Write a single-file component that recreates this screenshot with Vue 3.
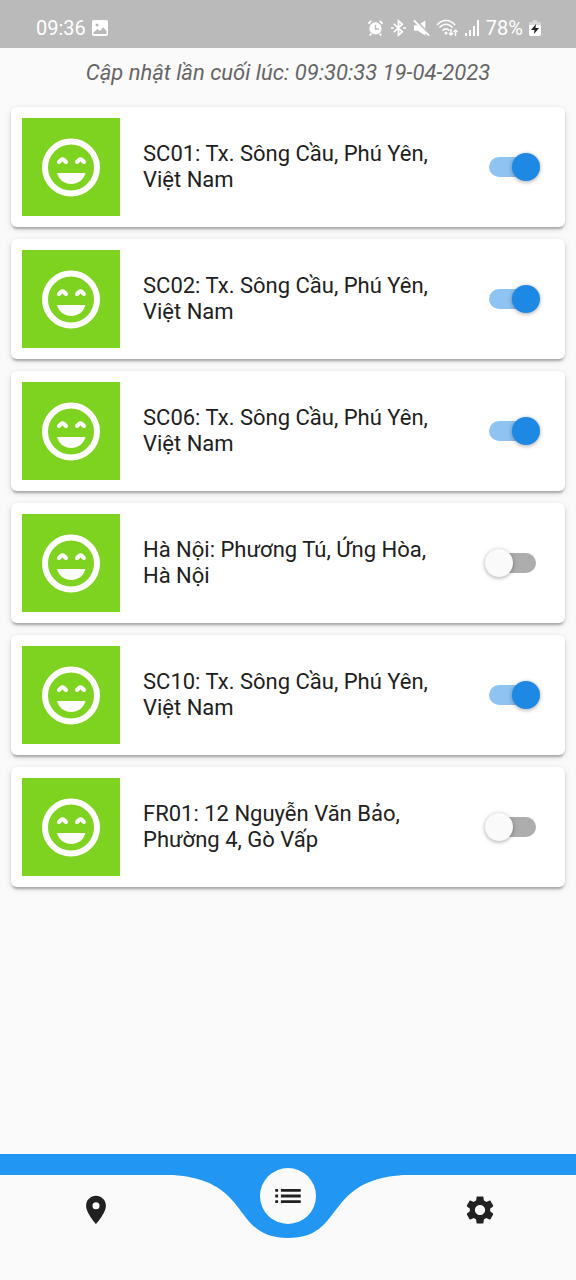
<script setup>
import { ref } from "vue";

const updatedAt = ref("09:30:33 19-04-2023");

const stations = ref([
  { id: "sc01", name: "SC01: Tx. Sông Cầu, Phú Yên, Việt Nam", enabled: true },
  { id: "sc02", name: "SC02: Tx. Sông Cầu, Phú Yên, Việt Nam", enabled: true },
  { id: "sc06", name: "SC06: Tx. Sông Cầu, Phú Yên, Việt Nam", enabled: true },
  { id: "hanoi", name: "Hà Nội: Phương Tú, Ứng Hòa, Hà Nội", enabled: false },
  { id: "sc10", name: "SC10: Tx. Sông Cầu, Phú Yên, Việt Nam", enabled: true },
  { id: "fr01", name: "FR01: 12 Nguyễn Văn Bảo, Phường 4, Gò Vấp", enabled: false },
]);
</script>

<template>
  <div class="screen">
    <header class="status-bar">
      <div class="status-group">
        <span class="clock">09:36</span>
        <svg class="picture" viewBox="0 0 16 16">
          <path
            fill="#fff"
            fill-rule="evenodd"
            d="M2 0h12a2 2 0 0 1 2 2v12a2 2 0 0 1-2 2H2a2 2 0 0 1-2-2V2a2 2 0 0 1 2-2zM1.500 12.500v1.500h13v-3L11 7.200 8 11 5.500 9zM5 3.500a1.500 1.500 0 1 0 0 3 1.500 1.500 0 0 0 0-3z"
          />
        </svg>
      </div>
      <div class="status-group">
        <svg class="glyph" viewBox="0 0 18 18" fill="none" stroke="#fff">
          <circle cx="9" cy="9.500" r="6.500" fill="#fff" stroke="none" />
          <path d="M1.500 4.500l3-3M16.500 4.500l-3-3M4.500 15l-1.500 2M13.500 15l1.500 2" stroke-width="2" />
          <path d="M9 5.500v4.500h3.500" stroke="#bababa" stroke-width="1.500" />
        </svg>
        <svg class="glyph" viewBox="0 0 18 18" fill="none" stroke="#fff" stroke-width="1.800">
          <path d="M4 4.500l9 8.500-4 3.500v-15l4 3.500-9 8.500" />
          <path d="M1 9h3M14 9h3" />
        </svg>
        <svg class="glyph" viewBox="0 0 18 18">
          <path d="M1 6h4l8-5v16l-8-5H1z" fill="#fff" />
          <path d="M2 0l16 16" stroke="#bababa" stroke-width="2" />
          <path d="M1 1l16 16" stroke="#fff" stroke-width="2" />
        </svg>
        <svg class="wifi" viewBox="0 0 22 18" fill="none" stroke="#fff" stroke-width="1.500">
          <path d="M1 6c5-6 13-6 18 0M3.500 8.500c4-4.500 9-4.500 13 0M6.500 11.500c2.500-2.500 4.500-2.500 7 0" />
          <circle cx="10" cy="14" r="1.500" fill="#fff" stroke="none" />
          <path d="M15 10v6M13 14l2 2 2-2M19.500 17v-6M17.500 13l2-2 2 2" />
        </svg>
        <svg class="signal" viewBox="0 0 16 18" stroke="#fff" stroke-width="2">
          <path d="M2 17v-3M6 17v-6M10 17V7M14 17V1" />
        </svg>
        <span class="clock">78%</span>
        <svg class="battery" viewBox="0 0 12 18">
          <path d="M4 1h4v2h2a2 2 0 0 1 2 2v2H0V5a2 2 0 0 1 2-2h2z" fill="#d8d8d8" />
          <path d="M0 6h12v9a2 2 0 0 1-2 2H2a2 2 0 0 1-2-2z" fill="#fff" />
          <path d="M7 5l-5 6h3.500L5 15l5-6H6.500z" fill="#222" />
        </svg>
      </div>
    </header>

    <main class="content">
      <p class="updated">Cập nhật lần cuối lúc: {{ updatedAt }}</p>

      <ul class="stations">
        <li v-for="station in stations" :key="station.id" class="card">
          <svg class="mood" viewBox="0 0 98 98">
            <circle cx="49" cy="49.500" r="26" fill="none" stroke="#fff" stroke-width="6" />
            <path
              d="M37 44l2-2q1.500-1.500 3 0l2 2M55 44l2-2q1.500-1.500 3 0l2 2"
              fill="none"
              stroke="#fff"
              stroke-width="4"
              stroke-linecap="round"
            />
            <path d="M35 55h28.500C61.500 62 56 66 49.250 66S37 62 35 55z" fill="#fff" />
          </svg>
          <label class="name" :for="station.id">{{ station.name }}</label>
          <input
            :id="station.id"
            v-model="station.enabled"
            class="switch"
            type="checkbox"
            role="switch"
          />
        </li>
      </ul>
    </main>

    <nav class="bottom-nav">
      <svg class="wave" viewBox="0 0 576 84" preserveAspectRatio="none">
        <path
          d="M0 0H576V21H403.200C322.600 26.250 345.600 84 288 84S253.400 26.250 172.800 21H0z"
          fill="#2196f3"
        />
      </svg>
      <a class="nav-item" href="#map" aria-label="Bản đồ">
        <svg viewBox="0 0 24 24">
          <path
            d="M12 2C8.130 2 5 5.130 5 9c0 5.250 7 13 7 13s7-7.750 7-13c0-3.870-3.130-7-7-7zm0 9.500a2.500 2.500 0 0 1 0-5 2.500 2.500 0 0 1 0 5z"
          />
        </svg>
      </a>
      <a class="nav-item active" href="#list" aria-label="Danh sách">
        <svg viewBox="0 0 24 24">
          <path
            d="M3 13h2v-2H3v2zm0 4h2v-2H3v2zm0-8h2V7H3v2zm4 4h14v-2H7v2zm0 4h14v-2H7v2zM7 7v2h14V7H7z"
          />
        </svg>
      </a>
      <a class="nav-item" href="#settings" aria-label="Cài đặt">
        <svg viewBox="0 0 24 24">
          <path
            d="M19.140 12.940c.04-.3.06-.61.06-.94 0-.32-.02-.64-.07-.94l2.030-1.580c.18-.14.23-.41.12-.61l-1.920-3.320c-.12-.22-.37-.29-.59-.22l-2.390.96c-.5-.38-1.030-.7-1.620-.94l-.36-2.540c-.04-.24-.24-.41-.48-.41h-3.840c-.24 0-.43.17-.47.41l-.36 2.540c-.59.24-1.130.57-1.620.94l-2.390-.96c-.22-.08-.47 0-.59.22L2.740 8.870c-.12.21-.08.47.12.61l2.030 1.580c-.05.3-.09.63-.09.94s.02.64.07.94l-2.030 1.580c-.18.14-.23.41-.12.61l1.920 3.320c.12.22.37.29.59.22l2.390-.96c.5.38 1.030.7 1.620.94l.36 2.540c.05.24.24.41.48.41h3.840c.24 0 .44-.17.47-.41l.36-2.540c.59-.24 1.130-.56 1.620-.94l2.390.96c.22.08.47 0 .59-.22l1.920-3.320c.12-.22.07-.47-.12-.61l-2.010-1.580zM12 15.600c-1.980 0-3.600-1.620-3.600-3.600s1.620-3.600 3.600-3.600 3.600 1.620 3.600 3.600-1.620 3.600-3.600 3.600z"
          />
        </svg>
      </a>
    </nav>
  </div>
</template>

<style>
body {
  margin: 0;
  background: #fafafa;
}
</style>

<style scoped>
.screen {
  min-height: 100vh;
  display: flex;
  flex-direction: column;
  background: #fafafa;
  color: #212121;
  font-family: Roboto, "Noto Sans", sans-serif;
  font-size: 22px;
  line-height: 26px;
}

.status-bar {
  display: flex;
  justify-content: space-between;
  height: 48px;
  padding: 8px 35px 0 36px;
  box-sizing: border-box;
  background: #bababa;
  color: #fff;
}

.status-group {
  display: flex;
  align-items: center;
  gap: 6px;
}

.clock {
  font-size: 20px;
}

.picture {
  width: 16px;
  height: 16px;
}

.glyph {
  width: 17px;
  height: 18px;
}

.wifi {
  width: 22px;
  height: 18px;
}

.signal {
  width: 16px;
  height: 18px;
}

.battery {
  width: 12px;
  height: 18px;
}

.content {
  flex: 1;
}

.updated {
  margin: 0;
  padding: 12px 12px 21px;
  color: #666;
  font-style: italic;
  text-align: center;
}

.stations {
  display: flex;
  flex-direction: column;
  gap: 12px;
  margin: 0;
  padding: 0 11px;
  list-style: none;
}

.card {
  display: flex;
  align-items: center;
  padding: 11px 25px 11px 11px;
  border-radius: 6px;
  background: #fff;
  box-shadow:
    0 4px 2px -2px rgba(0, 0, 0, 0.16),
    0 2px 3px rgba(0, 0, 0, 0.14),
    0 2px 7px rgba(0, 0, 0, 0.12);
}

.mood {
  flex: none;
  width: 98px;
  height: 98px;
  background: #7ed321;
}

.name {
  flex: 1;
  margin: 0 46px 0 23px;
}

.switch {
  flex: none;
  display: grid;
  align-items: center;
  width: 55px;
  height: 28px;
  margin: 0;
  appearance: none;
}

.switch::before,
.switch::after {
  content: "";
  grid-area: 1 / 1;
}

.switch::before {
  justify-self: center;
  width: 47px;
  height: 20px;
  border-radius: 10px;
  background: #adadad;
}

.switch::after {
  justify-self: start;
  width: 28px;
  height: 28px;
  border-radius: 50%;
  background: #fafafa;
  box-shadow: 0 1px 4px rgba(0, 0, 0, 0.35);
}

.switch:checked::before {
  background: #8fc3f2;
}

.switch:checked::after {
  justify-self: end;
  background: #1e88e5;
}

.bottom-nav {
  position: relative;
  display: flex;
  height: 126px;
}

.wave {
  position: absolute;
  top: 0;
  left: 0;
  width: 100%;
  height: 84px;
}

.nav-item {
  position: relative;
  flex: 1;
  display: flex;
  justify-content: center;
  align-items: center;
  height: 112px;
}

.nav-item svg {
  width: 34px;
  height: 34px;
  fill: #212121;
}

.active {
  height: 84px;
}

.active svg {
  padding: 11px;
  border-radius: 50%;
  background: #fafafa;
}
</style>
